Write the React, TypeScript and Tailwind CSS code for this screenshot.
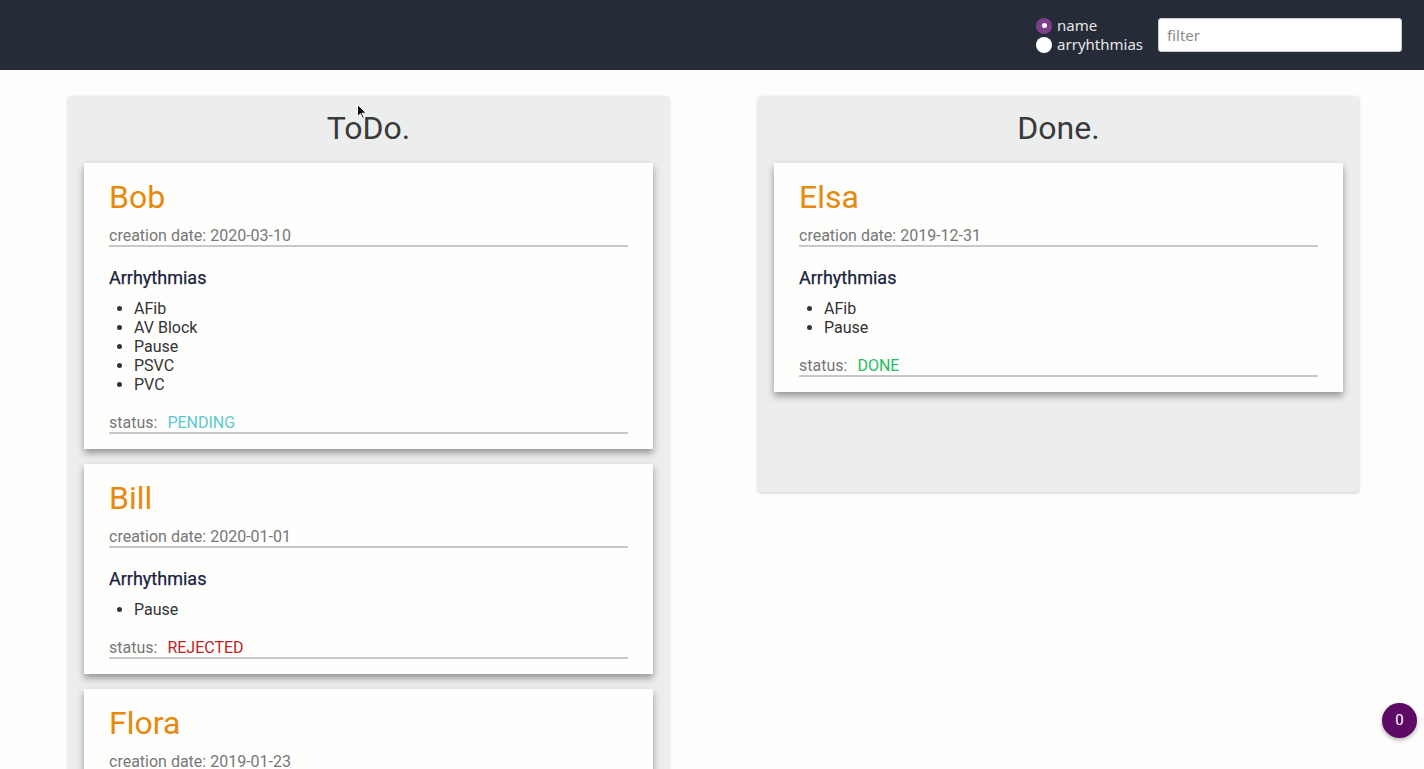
import { useState } from 'react';

type Status = 'PENDING' | 'REJECTED' | 'DONE';

interface Patient {
  name: string;
  created: string;
  arrhythmias: string[];
  status: Status;
}

const todo: Patient[] = [
  { name: 'Bob', created: '2020-03-10', arrhythmias: ['AFib', 'AV Block', 'Pause', 'PSVC', 'PVC'], status: 'PENDING' },
  { name: 'Bill', created: '2020-01-01', arrhythmias: ['Pause'], status: 'REJECTED' },
  { name: 'Flora', created: '2019-01-23', arrhythmias: ['AFib', 'PVC'], status: 'PENDING' },
];

const done: Patient[] = [
  { name: 'Elsa', created: '2019-12-31', arrhythmias: ['AFib', 'Pause'], status: 'DONE' },
];

const statusColor: Record<Status, string> = {
  PENDING: 'text-[#5cc9d1]',
  REJECTED: 'text-[#c0221f]',
  DONE: 'text-[#22c062]',
};

function Card({ p }: { p: Patient }) {
  return (
    <div className="bg-[#fefefd] px-[25px] pt-4 pb-[15px] shadow-[0_4px_7px_rgba(0,0,0,0.38)]">
      <h2 className="text-[32px] leading-[36px] text-[#e8890c]">{p.name}</h2>
      <div className="mt-[11px] border-b-2 border-[#c8c8c8] text-base leading-[19px] text-[#777]">
        creation date: {p.created}
      </div>
      <h3 className="mt-[20px] text-lg leading-[21px] text-[#1a2240] [-webkit-text-stroke:0.25px_#1a2240]">Arrhythmias</h3>
      <ul className="mt-[11px] list-disc pl-[25px] text-base leading-[19px] text-[#333] marker:text-[#333]">
        {p.arrhythmias.map((a) => (
          <li key={a}>{a}</li>
        ))}
      </ul>
      <div className="mt-[19px] flex gap-[10px] border-b-2 border-[#c8c8c8] text-base leading-[19px]">
        <span className="text-[#777]">status:</span>
        <span className={statusColor[p.status]}>{p.status}</span>
      </div>
    </div>
  );
}

function Column({ title, items }: { title: string; items: Patient[] }) {
  return (
    <section className="w-[601px] self-start rounded-[3px] bg-[#eceeed] px-4 pt-[13px] pb-[100px] shadow-[0_1px_3px_rgba(0,0,0,0.2)]">
      <h1 className="text-center text-[32px] leading-[38px] text-[#3a3a3a]">{title}</h1>
      <div className="mt-[16px] flex flex-col gap-[15px]">
        {items.map((p) => (
          <Card key={p.name} p={p} />
        ))}
      </div>
    </section>
  );
}

function Radio({ checked, label, onClick }: { checked: boolean; label: string; onClick: () => void }) {
  return (
    <label onClick={onClick} className="flex cursor-pointer items-center gap-[5px] leading-[19px]">
      <span
        className={
          checked
            ? 'flex h-4 w-4 items-center justify-center rounded-full bg-[#7d3f8c]'
            : 'h-4 w-4 rounded-full bg-white'
        }
      >
        {checked && <span className="h-[5px] w-[5px] rounded-full bg-white" />}
      </span>
      {label}
    </label>
  );
}

export default function App() {
  const [mode, setMode] = useState<'name' | 'arr'>('name');

  return (
    <div className="relative h-screen overflow-hidden bg-[#fdfdfc] font-['Roboto',sans-serif]">
      <header className="flex h-[70px] items-center justify-end gap-[15px] bg-[#252b37] pr-[22px]">
        <div className="flex flex-col font-['Noto_Sans',sans-serif] text-[15px] text-[#e6e6e6]">
          <Radio checked={mode === 'name'} label="name" onClick={() => setMode('name')} />
          <Radio checked={mode === 'arr'} label="arryhthmias" onClick={() => setMode('arr')} />
        </div>
        <input
          placeholder="filter"
          className="h-[34px] w-[244px] rounded-[3px] border border-[#ccc] bg-white px-2 font-['Noto_Sans',sans-serif] text-[15px] text-[#333] outline-none placeholder:text-[#8a8a8a]"
        />
      </header>

      <main className="flex gap-[89px] pt-[26px] pl-[68px]">
        <Column title="ToDo." items={todo} />
        <Column title="Done." items={done} />
      </main>

      <div className="absolute right-[7px] top-[703px] flex h-[35px] w-[35px] items-center justify-center rounded-full bg-[#5c0a64] text-[15px] text-white shadow-[0_2px_4px_rgba(0,0,0,0.3)]">
        0
      </div>

      <svg className="absolute left-[357px] top-[104px]" width="10" height="16" viewBox="0 0 10 16">
        <path d="M0.5 0.5 L0.5 12.5 L3.5 9.8 L5.6 14.6 L7.2 13.9 L5.2 9.2 L9.2 9.2 Z" fill="#111" stroke="#fff" strokeWidth="1" />
      </svg>
    </div>
  );
}
